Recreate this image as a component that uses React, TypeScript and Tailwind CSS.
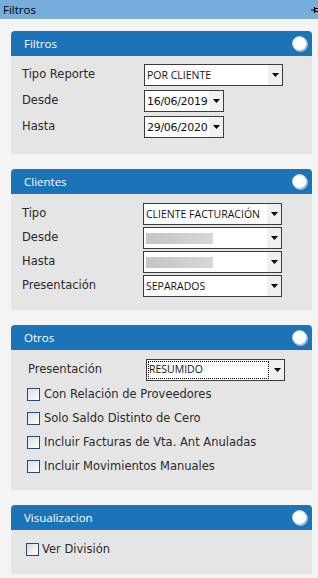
import React from "react";

const Tri = () => (
  <svg width="7" height="4" viewBox="0 0 7 4">
    <polygon points="0,0 7,0 3.5,4" fill="#000" />
  </svg>
);

type SelProps = {
  w: string;
  children?: React.ReactNode;
  focus?: boolean;
  blank?: boolean;
};

const Select = ({ w, children, focus, blank }: SelProps) => (
  <div className={`flex h-[22px] border border-[#3c3c3c] bg-white ${w}`}>
    <div className="flex flex-1 items-center overflow-hidden p-[1px]">
      {focus ? (
        <div className="flex h-full w-full items-center border border-dotted border-black pl-[0px] text-[10.5px] text-[#111]" style={{ fontFamily: '"Open Sans", sans-serif' }}>
          {children}
        </div>
      ) : blank ? (
        <div className="ml-[1px] h-[11px] w-[67px] bg-linear-to-r from-[#c5c5c5] via-[#cdcdcd] to-[#d8d8d8] blur-[0.6px]" />
      ) : (
        <div className="pl-[1px] text-[10.5px] leading-none text-[#111] whitespace-nowrap" style={{ fontFamily: '"Open Sans", sans-serif' }}>
          {children}
        </div>
      )}
    </div>
    <div className="flex w-[14px] items-center justify-center bg-[#f0f0f0]">
      <Tri />
    </div>
  </div>
);

const Circle = () => (
  <div className="h-[15px] w-[15px] rounded-full border border-[#b9cbdc] bg-white shadow-[1px_1px_0_#9fb3c6]" />
);

const Panel = ({ title, children, body }: { title: string; children: React.ReactNode; body: string }) => (
  <div className="ml-[11px] w-[301px]">
    <div className="flex h-[25px] items-center justify-between rounded-t-[4px] bg-[#1c74b8] pl-[13px] pr-[5px]">
      <span className="text-[11.5px] text-white" style={{ fontFamily: '"Open Sans", sans-serif' }}>
        {title}
      </span>
      <Circle />
    </div>
    <div className={`bg-[#e5e5e5] ${body}`}>{children}</div>
  </div>
);

const Label = ({ w, children }: { w: string; children: React.ReactNode }) => (
  <div className={`text-[11.5px] text-[#2a2a2a] whitespace-nowrap ${w}`} style={{ fontFamily: '"DejaVu Sans", sans-serif' }}>
    {children}
  </div>
);

const Check = ({ children, gap }: { children: React.ReactNode; gap: string }) => (
  <div className={`flex h-[13px] items-center ${gap}`}>
    <div className="h-[13px] w-[13px] shrink-0 border border-[#1f4e7a] bg-linear-to-br from-[#dcdcdc] to-[#ffffff]" />
    <span className="text-[11.5px] text-[#2a2a2a] whitespace-nowrap" style={{ fontFamily: '"DejaVu Sans", sans-serif' }}>
      {children}
    </span>
  </div>
);

export default function App() {
  return (
    <div className="h-[578px] w-[318px] overflow-hidden bg-[#f4f4f4]">
      <div className="flex h-[19px] items-center bg-[#76aedb] pl-[3px]">
        <span className="text-[11.5px] text-black" style={{ fontFamily: '"Open Sans", sans-serif' }}>
          Filtros
        </span>
        <svg className="ml-auto" width="7" height="8" viewBox="0 0 7 8">
          <line x1="0" y1="4" x2="3" y2="4" stroke="#000" strokeWidth="1" />
          <line x1="3.5" y1="1" x2="3.5" y2="7" stroke="#000" strokeWidth="1" />
          <rect x="4" y="2.5" width="4" height="3" fill="none" stroke="#000" strokeWidth="1" />
        </svg>
      </div>

      <div className="mt-[12px]">
        <Panel title="Filtros" body="pt-[8px] pb-[16px] pl-[11px] flex flex-col gap-[4px]">
          <div className="flex items-center">
            <Label w="w-[122px]">Tipo Reporte</Label>
            <Select w="w-[139px]">POR CLIENTE</Select>
          </div>
          <div className="flex items-center">
            <Label w="w-[122px]">Desde</Label>
            <Select w="w-[80px]">
              <span className="text-[11px]" style={{ fontFamily: '"DejaVu Sans", sans-serif', letterSpacing: "-0.3px" }}>16/06/2019</span>
            </Select>
          </div>
          <div className="flex items-center">
            <Label w="w-[122px]">Hasta</Label>
            <Select w="w-[80px]">
              <span className="text-[11px]" style={{ fontFamily: '"DejaVu Sans", sans-serif', letterSpacing: "-0.3px" }}>29/06/2020</span>
            </Select>
          </div>
        </Panel>
      </div>

      <div className="mt-[15px]">
        <Panel title="Clientes" body="pt-[9px] pb-[13px] pl-[11px] flex flex-col gap-[2px]">
          <div className="flex items-center">
            <Label w="w-[121px]">Tipo</Label>
            <Select w="w-[139px]">CLIENTE FACTURACIÓN</Select>
          </div>
          <div className="flex items-center">
            <Label w="w-[121px]">Desde</Label>
            <Select w="w-[139px]" blank />
          </div>
          <div className="flex items-center">
            <Label w="w-[121px]">Hasta</Label>
            <Select w="w-[139px]" blank />
          </div>
          <div className="flex items-center">
            <Label w="w-[121px]">Presentación</Label>
            <Select w="w-[139px]">SEPARADOS</Select>
          </div>
        </Panel>
      </div>

      <div className="mt-[15px]">
        <Panel title="Otros" body="pt-[9px] pb-[17px]">
          <div className="flex items-center pl-[17px]">
            <Label w="w-[118px]">Presentación</Label>
            <Select w="w-[139px]" focus>RESUMIDO</Select>
          </div>
          <div className="mt-[7px] flex flex-col gap-[11px] pl-[16px]">
            <Check gap="gap-[4px]">Con Relación de Proveedores</Check>
            <Check gap="gap-[4px]">Solo Saldo Distinto de Cero</Check>
            <Check gap="gap-[4px]">Incluir Facturas de Vta. Ant Anuladas</Check>
            <Check gap="gap-[4px]">Incluir Movimientos Manuales</Check>
          </div>
        </Panel>
      </div>

      <div className="mt-[15px]">
        <Panel title="Visualizacion" body="pt-[13px] pb-[18px] pl-[15px]">
          <Check gap="gap-[3px]">Ver División</Check>
        </Panel>
      </div>
    </div>
  );
}
